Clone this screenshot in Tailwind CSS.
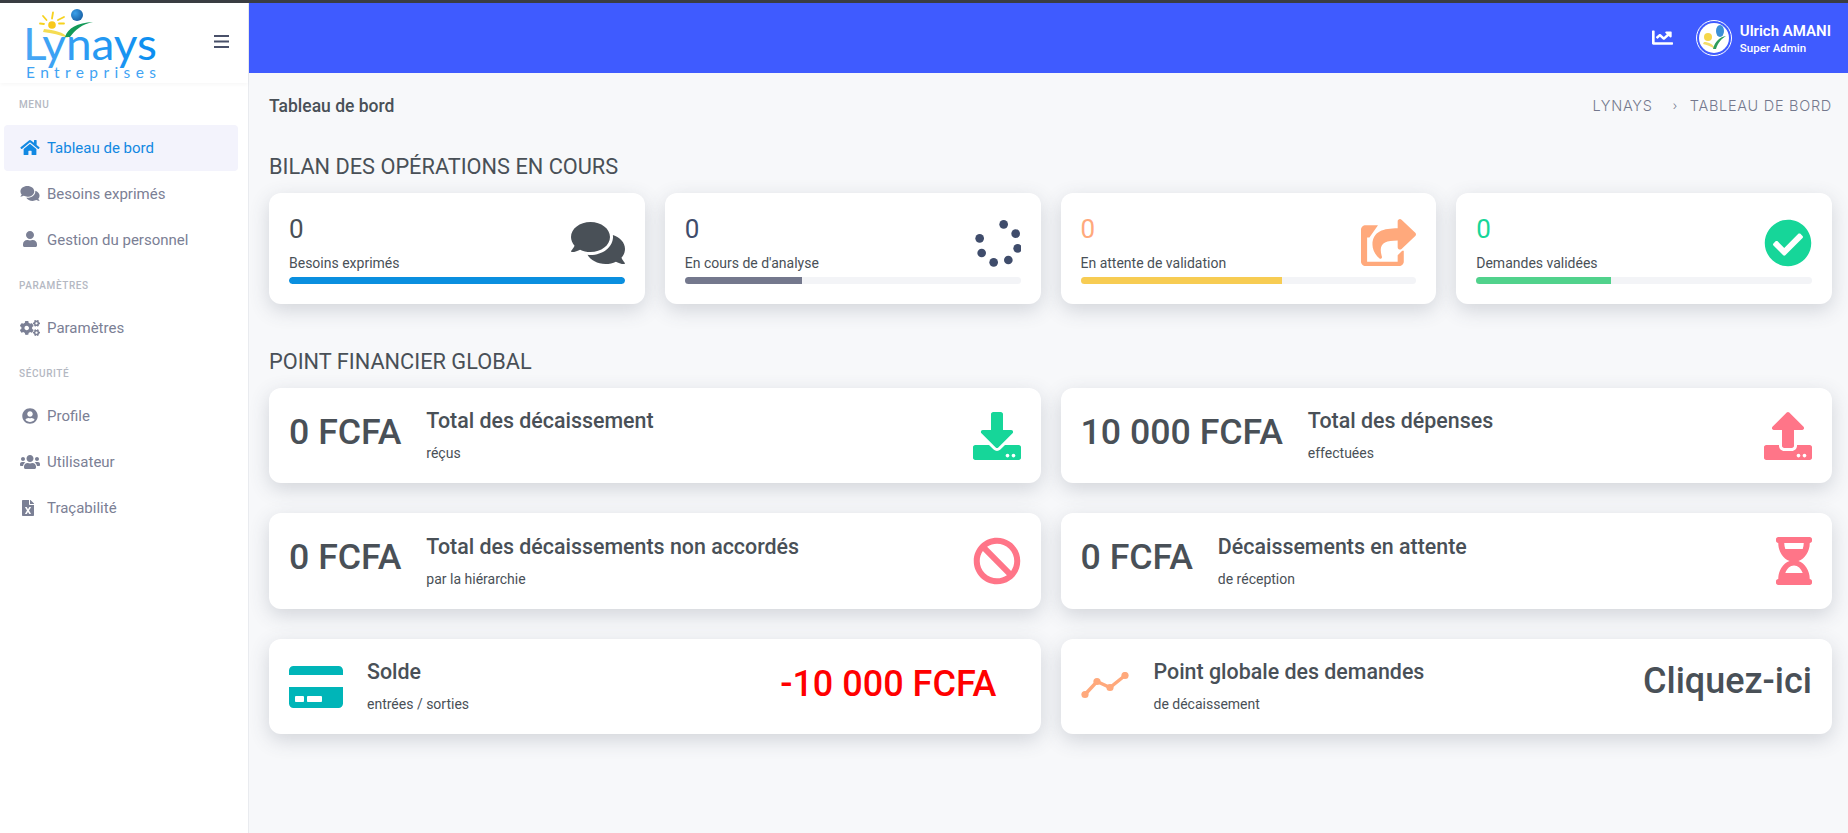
<!DOCTYPE html>
<html lang="fr">
<head>
    <meta charset="UTF-8" />
    <meta name="viewport" content="width=device-width, initial-scale=1.0"/>
    <title>Tableau de bord</title>
    <script src="https://cdn.jsdelivr.net/npm/@tailwindcss/browser@4"></script>
</head>
<body class="bg-[#f7f8fa] text-[#495057] font-['Roboto',sans-serif] overflow-hidden">
<div class="h-[3px] bg-[#3a3d42]"></div>
<div class="flex h-[830px]">

    <!-- Sidebar -->
    <aside class="w-[249px] shrink-0 bg-white border-r border-[#e9ebef] text-[#7b8095]">
        <div class="h-[80px] relative flex items-center justify-end pr-[19px] pb-[4px] shadow-[0_2px_4px_rgba(0,0,0,0.03)]">
            <svg class="absolute left-[20px] top-0" width="145" height="80" viewBox="0 0 145 80">
                <defs>
                    <linearGradient id="logoText" x1="0" x2="1" y1="0" y2="0">
                        <stop offset="0" stop-color="#4aa8f5"/>
                        <stop offset="1" stop-color="#0a8df0"/>
                    </linearGradient>
                    <radialGradient id="logoBall" cx="0.35" cy="0.35" r="0.8">
                        <stop offset="0" stop-color="#3aa0ea"/>
                        <stop offset="1" stop-color="#14589c"/>
                    </radialGradient>
                </defs>
                <circle cx="32" cy="22" r="3.8" fill="#f8c81c"/>
                <path d="M32 15.500l1-6M26.500 17l-3.500-4M38 17l6-3M24 21l-4-.5M39 20.500l5 0" stroke="#f6d21e" stroke-width="1.800" stroke-linecap="round" fill="none"/>
                <path d="M24 26c10 1 20 3 24 9-8-3-16-5-25-6z" fill="#f5dc52"/>
                <circle cx="57" cy="12" r="6" fill="url(#logoBall)"/>
                <path d="M45 34c3-9 12-14 28-15-11 2-18 8-23 15z" fill="#149a58"/>
                <text x="3" y="57" font-family="Lato, sans-serif" font-weight="400" font-size="45" textLength="134" lengthAdjust="spacingAndGlyphs" fill="url(#logoText)">Lynays</text>
                <text x="6" y="75" font-family="Lato, sans-serif" font-weight="400" font-size="15.500" textLength="130" fill="#3fa3f3">Entreprises</text>
            </svg>
            <svg width="15" height="13" viewBox="0 0 15 13"><path d="M0 0h15v2H0zM0 5.500h15v2H0zM0 11h15v2H0z" fill="#495069"/></svg>
        </div>

        <nav class="pl-[4px] pr-[10px] text-[15px]">
            <div class="h-[42px] flex items-center pl-[15px] pt-[1px] text-[10px] font-medium tracking-[0.06em] text-[#b4b8c2]">MENU</div>
            <a class="h-[46px] flex items-center pl-[16px] pt-[1px] gap-[7px] rounded bg-[#f3f3fc] text-[#1188e2]">
                <svg class="w-[20px] h-[17px] shrink-0 mb-[3px]" viewBox="0 0 576 512" fill="currentColor"><path d="M280.37 148.26L96 300.11V464a16 16 0 0 0 16 16l112.06-.29a16 16 0 0 0 15.92-16V368a16 16 0 0 1 16-16h64a16 16 0 0 1 16 16v95.64a16 16 0 0 0 16 16.05L464 480a16 16 0 0 0 16-16V300L295.67 148.26a12.19 12.19 0 0 0-15.3 0zM571.6 251.47L488 182.56V44.05a12 12 0 0 0-12-12h-56a12 12 0 0 0-12 12v72.61L318.47 43a48 48 0 0 0-61 0L4.34 251.47a12 12 0 0 0-1.6 16.9l25.5 31A12 12 0 0 0 45.15 301l235.22-193.74a12.19 12.19 0 0 1 15.3 0L530.9 301a12 12 0 0 0 16.9-1.6l25.5-31a12 12 0 0 0-1.7-16.93z"/></svg>
                <span>Tableau de bord</span>
            </a>
            <a class="h-[46px] flex items-center pl-[16px] pt-[1px] gap-[7px]">
                <svg class="w-[20px] h-[17px] shrink-0 mb-[3px]" viewBox="0 0 576 512" fill="currentColor"><path d="M416 192c0-88.400-93.100-160-208-160S0 103.600 0 192c0 34.300 14.100 65.900 38 92-13.400 30.200-35.500 54.200-35.800 54.500-2.200 2.300-2.800 5.700-1.500 8.700S4.800 352 8 352c36.600 0 66.900-12.300 88.700-25 32.200 15.700 70.300 25 111.300 25 114.900 0 208-71.600 208-160zm122 220c23.900-26 38-57.700 38-92 0-66.900-53.500-124.200-129.300-148.100.9 6.600 1.300 13.300 1.300 20.100 0 105.900-107.700 192-240 192-10.800 0-21.300-.8-31.700-1.900C207.800 439.600 281.800 480 368 480c41 0 79.100-9.200 111.300-25 21.800 12.700 52.100 25 88.700 25 3.200 0 6.100-1.900 7.300-4.800 1.300-2.900.7-6.300-1.500-8.700-.3-.3-22.400-24.200-35.800-54.500z"/></svg>
                <span>Besoins exprimés</span>
            </a>
            <a class="h-[46px] flex items-center pl-[16px] pt-[1px] gap-[7px]">
                <svg class="w-[20px] h-[16px] shrink-0 mb-[3px]" viewBox="0 0 448 512" fill="currentColor"><path d="M224 256c70.700 0 128-57.300 128-128S294.700 0 224 0 96 57.300 96 128s57.300 128 128 128zm89.600 32h-16.700c-22.200 10.200-46.900 16-72.900 16s-50.600-5.800-72.900-16h-16.700C60.200 288 0 348.200 0 422.400V464c0 26.500 21.500 48 48 48h352c26.500 0 48-21.500 48-48v-41.600c0-74.200-60.200-134.400-134.400-134.400z"/></svg>
                <span>Gestion du personnel</span>
            </a>

            <div class="h-[42px] flex items-center pl-[15px] mt-[1px] text-[10px] font-medium tracking-[0.06em] text-[#b4b8c2]">PARAMÈTRES</div>
            <a class="h-[46px] flex items-center pl-[16px] gap-[7px] mt-[-1px]">
                <svg class="w-[20px] h-[16px] shrink-0" viewBox="0 0 640 512" fill="currentColor"><path d="M512.100 191l-8.200 14.300c-3 5.300-9.400 7.500-15.100 5.400-11.800-4.400-22.600-10.700-32.100-18.600-4.600-3.800-5.800-10.500-2.800-15.700l8.200-14.300c-6.900-8-12.300-17.300-15.900-27.400h-16.500c-6 0-11.200-4.300-12.200-10.300-2-12-2.100-24.600 0-37.100 1-6 6.200-10.400 12.200-10.400h16.500c3.600-10.100 9-19.400 15.900-27.400l-8.200-14.300c-3-5.200-1.900-11.900 2.800-15.700 9.500-7.900 20.400-14.200 32.100-18.600 5.700-2.100 12.100.1 15.100 5.400l8.200 14.300c10.500-1.900 21.200-1.900 31.700 0L552 6.300c3-5.300 9.400-7.500 15.100-5.400 11.800 4.400 22.600 10.700 32.100 18.600 4.600 3.800 5.800 10.500 2.800 15.700l-8.200 14.300c6.900 8 12.300 17.300 15.900 27.400h16.500c6 0 11.200 4.300 12.200 10.300 2 12 2.100 24.600 0 37.100-1 6-6.200 10.400-12.200 10.400h-16.500c-3.600 10.100-9 19.400-15.900 27.400l8.200 14.300c3 5.200 1.900 11.900-2.800 15.700-9.500 7.900-20.400 14.200-32.100 18.600-5.700 2.100-12.100-.1-15.100-5.400l-8.200-14.300c-10.400 1.900-21.200 1.900-31.700 0zm-10.500-58.800c38.500 29.600 82.400-14.300 52.800-52.800-38.500-29.700-82.400 14.300-52.800 52.800zM386.300 286.100l33.700 16.800c10.100 5.800 14.500 18.100 10.500 29.100-8.900 24.200-26.400 46.400-42.600 65.800-7.400 8.900-20.200 11.100-30.300 5.300l-29.100-16.800c-16 13.700-34.600 24.600-54.900 31.700v33.600c0 11.600-8.300 21.600-19.700 23.600-24.600 4.200-50.400 4.400-75.900 0-11.500-2-20-11.900-20-23.600V418c-20.300-7.200-38.900-18-54.900-31.700L74 403c-10 5.800-22.900 3.600-30.300-5.300-16.200-19.400-33.300-41.600-42.200-65.700-4-10.900.4-23.200 10.500-29.100l33.300-16.800c-3.900-20.900-3.900-42.400 0-63.400L12 205.800c-10.100-5.800-14.600-18.100-10.500-29 8.900-24.200 26-46.400 42.200-65.800 7.400-8.900 20.200-11.100 30.300-5.300l29.100 16.800c16-13.700 34.600-24.600 54.900-31.700V57.100c0-11.500 8.200-21.500 19.600-23.500 24.600-4.200 50.500-4.400 76-.1 11.500 2 20 11.900 20 23.600v33.600c20.300 7.200 38.900 18 54.900 31.700l29.100-16.800c10-5.800 22.900-3.600 30.300 5.300 16.200 19.400 33.200 41.600 42.100 65.800 4 10.900.1 23.200-10 29.100l-33.700 16.800c3.900 21 3.900 42.500 0 63.500zm-117.600 21.100c59.200-77-28.700-164.900-105.700-105.700-59.200 77 28.700 164.900 105.700 105.700zm243.400 182.700l-8.200 14.300c-3 5.300-9.400 7.500-15.100 5.400-11.800-4.400-22.600-10.700-32.100-18.600-4.600-3.800-5.800-10.500-2.800-15.700l8.200-14.300c-6.900-8-12.300-17.300-15.900-27.400h-16.500c-6 0-11.200-4.300-12.200-10.300-2-12-2.100-24.600 0-37.100 1-6 6.200-10.400 12.200-10.400h16.500c3.600-10.100 9-19.400 15.900-27.400l-8.200-14.300c-3-5.200-1.900-11.900 2.800-15.700 9.500-7.900 20.400-14.200 32.100-18.600 5.700-2.100 12.100.1 15.100 5.400l8.200 14.300c10.500-1.900 21.200-1.900 31.700 0l8.200-14.300c3-5.300 9.400-7.500 15.100-5.400 11.800 4.400 22.600 10.700 32.100 18.600 4.600 3.800 5.800 10.500 2.800 15.700l-8.200 14.300c6.900 8 12.300 17.300 15.900 27.400h16.500c6 0 11.200 4.300 12.200 10.300 2 12 2.100 24.600 0 37.100-1 6-6.200 10.400-12.200 10.400h-16.500c-3.600 10.100-9 19.400-15.900 27.400l8.200 14.300c3 5.200 1.900 11.900-2.800 15.700-9.500 7.900-20.400 14.200-32.100 18.600-5.700 2.100-12.100-.1-15.100-5.400l-8.200-14.300c-10.400 1.900-21.200 1.900-31.700 0zM501.600 431c38.500 29.600 82.400-14.300 52.800-52.800-38.500-29.600-82.400 14.300-52.800 52.800z"/></svg>
                <span>Paramètres</span>
            </a>

            <div class="h-[42px] flex items-center pl-[15px] mt-[1px] text-[10px] font-medium tracking-[0.06em] text-[#b4b8c2]">SÉCURITÉ</div>
            <a class="h-[46px] flex items-center pl-[16px] gap-[7px] mt-[-1px]">
                <svg class="w-[20px] h-[16px] shrink-0" viewBox="0 0 496 512" fill="currentColor"><path d="M248 8C111 8 0 119 0 256s111 248 248 248 248-111 248-248S385 8 248 8zm0 96c48.600 0 88 39.400 88 88s-39.400 88-88 88-88-39.400-88-88 39.400-88 88-88zm0 344c-58.700 0-111.300-26.600-146.500-68.200 18.800-35.400 55.600-59.800 98.500-59.800 2.400 0 4.800.4 7.100 1.100 13 4.200 26.600 6.900 40.900 6.900 14.300 0 28-2.700 40.900-6.900 2.300-.7 4.700-1.100 7.100-1.100 42.900 0 79.700 24.400 98.500 59.800C359.300 421.400 306.700 448 248 448z"/></svg>
                <span>Profile</span>
            </a>
            <a class="h-[46px] flex items-center pl-[16px] gap-[7px]">
                <svg class="w-[20px] h-[16px] shrink-0" viewBox="0 0 640 512" fill="currentColor"><path d="M96 224c35.300 0 64-28.700 64-64s-28.700-64-64-64-64 28.700-64 64 28.700 64 64 64zm448 0c35.300 0 64-28.700 64-64s-28.700-64-64-64-64 28.700-64 64 28.700 64 64 64zm32 32h-64c-17.600 0-33.500 7.100-45.100 18.600 40.300 22.100 68.900 62 75.100 109.400h66c17.700 0 32-14.300 32-32v-32c0-35.300-28.700-64-64-64zm-256 0c61.900 0 112-50.100 112-112S381.900 32 320 32 208 82.100 208 144s50.100 112 112 112zm76.800 32h-8.300c-20.800 10-43.900 16-68.500 16s-47.600-6-68.500-16h-8.300C179.600 288 128 339.600 128 403.200V432c0 26.500 21.500 48 48 48h288c26.500 0 48-21.500 48-48v-28.800c0-63.600-51.600-115.200-115.200-115.200zm-223.700-13.400C161.500 263.100 145.600 256 128 256H64c-35.300 0-64 28.700-64 64v32c0 17.700 14.300 32 32 32h65.900c6.300-47.400 34.900-87.300 75.200-109.400z"/></svg>
                <span>Utilisateur</span>
            </a>
            <a class="h-[46px] flex items-center pl-[16px] gap-[7px]">
                <svg class="w-[20px] h-[16px] shrink-0" viewBox="0 0 448 512" fill="currentColor"><path transform="translate(-32 0)" d="M224 136V0H24C10.700 0 0 10.700 0 24v464c0 13.300 10.700 24 24 24h336c13.300 0 24-10.700 24-24V160H248c-13.200 0-24-10.800-24-24zm60.100 106.500L224 336l60.100 93.500c5.100 8-.6 18.500-10.100 18.500h-34.900c-4.400 0-8.500-2.400-10.600-6.300C208.900 405.500 192 373 192 373c-6.100 14.100-9.500 19.100-36.600 68.800-2.100 3.900-6.100 6.300-10.500 6.300H110c-9.500 0-15.200-10.500-10.100-18.500l60.300-93.500-60.300-93.500c-5.200-8 .6-18.500 10.100-18.500h34.800c4.400 0 8.500 2.400 10.600 6.300 26.100 48.800 20 33.600 36.600 68.500 0 0 6.100-11.700 36.600-68.500 2.100-3.900 6.200-6.300 10.600-6.300H274c9.500-.1 15.200 10.400 10.100 18.400zM384 121.900v6.100H256V0h6.100c6.400 0 12.500 2.500 17 7l97.900 98c4.500 4.500 7 10.600 7 16.900z"/></svg>
                <span>Traçabilité</span>
            </a>
        </nav>
    </aside>

    <!-- Main -->
    <div class="flex-1 min-w-0">
        <header class="h-[70px] bg-[#3f5bff] flex items-center justify-end pr-[17px] text-white">
            <svg class="w-[21px] h-[19px] mr-[23px] mb-[2px]" viewBox="0 0 512 512" preserveAspectRatio="none" fill="currentColor"><path d="M496 384H64V80c0-8.840-7.160-16-16-16H16C7.160 64 0 71.160 0 80v336c0 17.670 14.330 32 32 32h464c8.840 0 16-7.160 16-16v-32c0-8.840-7.160-16-16-16zM464 96H345.940c-21.380 0-32.090 25.850-16.970 40.970l32.400 32.400L288 242.750l-73.370-73.370c-12.500-12.500-32.760-12.500-45.250 0l-68.690 68.690c-6.250 6.250-6.250 16.380 0 22.630l22.620 22.620c6.250 6.250 16.380 6.250 22.630 0L192 237.250l73.370 73.370c12.500 12.500 32.760 12.500 45.250 0l96-96 32.400 32.400c15.120 15.120 40.970 4.410 40.970-16.970V112c0-8.840-7.160-16-16-16z"/></svg>
            <div class="w-[36px] h-[36px] rounded-full border border-white p-[2px] mr-[8px]">
                <svg class="w-full h-full rounded-full bg-white" viewBox="0 0 30 30">
                    <circle cx="9" cy="14" r="4" fill="#f5d64a"/>
                    <path d="M5 19c5 0 9 2 11 7-5-3-8-4-12-5z" fill="#f3dc6a"/>
                    <ellipse cx="21" cy="8" rx="4" ry="6" fill="#3b8fd6"/>
                    <path d="M14 26c2-8 7-12 13-13-5 3-8 7-10 13z" fill="#2f9d5c"/>
                </svg>
            </div>
            <div class="mt-[2px]">
                <div class="text-[15px] leading-[18px] font-semibold">Ulrich AMANI</div>
                <div class="text-[11.5px] leading-[17px] font-medium">Super Admin</div>
            </div>
        </header>

        <div class="pl-[20px] pr-[16px]">
            <div class="h-[66px] flex items-center justify-between">
                <h4 class="text-[17.5px] font-medium">Tableau de bord</h4>
                <div class="flex items-center text-[14.5px] tracking-[0.05em] text-[#74788d] font-['Inter',sans-serif] font-light">
                    <span>LYNAYS</span>
                    <span class="ml-[20px] mr-[12px] text-[12px]">›</span>
                    <span>TABLEAU DE BORD</span>
                </div>
            </div>

            <h2 class="text-[21.75px] leading-[28px] mt-[14px] mb-[12px]">BILAN DES OPÉRATIONS EN COURS</h2>

            <div class="grid grid-cols-4 gap-[20px]">
                <div class="h-[111px] bg-white rounded-xl shadow-[0_6px_20px_rgba(60,70,90,0.2)] px-[20px] pt-[20px]">
                    <div class="flex justify-between h-[64px]">
                        <div>
                            <div class="text-[26px] leading-[30px] mt-[1px]">0</div>
                            <div class="text-[14px] leading-[18px] mt-[10px]">Besoins exprimés</div>
                        </div>
                        <svg class="w-[54px] h-[48px] mt-[6px]" viewBox="0 0 576 512" fill="#495057"><path d="M416 192c0-88.400-93.100-160-208-160S0 103.600 0 192c0 34.300 14.100 65.900 38 92-13.400 30.200-35.500 54.200-35.800 54.500-2.200 2.300-2.800 5.700-1.500 8.700S4.800 352 8 352c36.600 0 66.900-12.300 88.700-25 32.200 15.700 70.300 25 111.300 25 114.900 0 208-71.600 208-160zm122 220c23.900-26 38-57.700 38-92 0-66.900-53.500-124.200-129.300-148.100.9 6.600 1.300 13.300 1.300 20.100 0 105.900-107.700 192-240 192-10.800 0-21.300-.8-31.700-1.900C207.800 439.600 281.800 480 368 480c41 0 79.100-9.200 111.300-25 21.800 12.700 52.100 25 88.700 25 3.200 0 6.100-1.900 7.300-4.800 1.300-2.900.7-6.300-1.500-8.700-.3-.3-22.400-24.200-35.800-54.500z"/></svg>
                    </div>
                    <div class="h-[7px] rounded-full bg-[#f3f4f7] overflow-hidden"><div class="h-full bg-[#0a8fdf] rounded-full" style="width:100%"></div></div>
                </div>

                <div class="h-[111px] bg-white rounded-xl shadow-[0_6px_20px_rgba(60,70,90,0.2)] px-[20px] pt-[20px]">
                    <div class="flex justify-between h-[64px]">
                        <div>
                            <div class="text-[26px] leading-[30px] mt-[1px] text-[#3f4c6b]">0</div>
                            <div class="text-[14px] leading-[18px] mt-[10px]">En cours de d'analyse</div>
                        </div>
                        <svg class="w-[48px] h-[48px] mt-[6px]" viewBox="0 0 144 144" fill="#3f4c6b"><circle cx="92" cy="16" r="13"/><circle cx="128" cy="44" r="13"/><circle cx="134" cy="88" r="13"/><circle cx="106" cy="123" r="13"/><circle cx="62" cy="130" r="13"/><circle cx="26" cy="102" r="13"/><circle cx="20" cy="58" r="13"/></svg>
                    </div>
                    <div class="h-[7px] rounded-full bg-[#f3f4f7] overflow-hidden"><div class="h-full bg-[#74788d]" style="width:35%"></div></div>
                </div>

                <div class="h-[111px] bg-white rounded-xl shadow-[0_6px_20px_rgba(60,70,90,0.2)] px-[20px] pt-[20px]">
                    <div class="flex justify-between h-[64px]">
                        <div>
                            <div class="text-[26px] leading-[30px] mt-[1px] text-[#ffa97c]">0</div>
                            <div class="text-[14px] leading-[18px] mt-[10px]">En attente de validation</div>
                        </div>
                        <svg class="w-[55px] h-[49px] mt-[6px]" viewBox="0 0 576 512" fill="#ffa97c"><path d="M568.482 177.448L424.479 313.433C409.300 327.768 384 317.140 384 295.985v-71.963c-144.575.97-205.566 35.113-164.775 171.353 4.483 14.973-12.846 26.567-25.006 17.330C155.252 383.105 120 326.488 120 269.339c0-143.937 117.599-172.500 264-173.312V24.012c0-21.174 25.317-31.768 40.479-17.448l144.003 135.988c10.020 9.463 10.028 25.425 0 34.896z"/><path d="M64 128h70l-46 64H64zM0 112c0-26.500 21.500-48 48-48h130L134 128H64v320h320v-70l48-46h16v112c0 26.500-21.500 48-48 48H48c-26.500 0-48-21.500-48-48z"/></svg>
                    </div>
                    <div class="h-[7px] rounded-full bg-[#f3f4f7] overflow-hidden"><div class="h-full bg-[#f7cc53]" style="width:60%"></div></div>
                </div>

                <div class="h-[111px] bg-white rounded-xl shadow-[0_6px_20px_rgba(60,70,90,0.2)] px-[20px] pt-[20px]">
                    <div class="flex justify-between h-[64px]">
                        <div>
                            <div class="text-[26px] leading-[30px] mt-[1px] text-[#16d699]">0</div>
                            <div class="text-[14px] leading-[18px] mt-[10px]">Demandes validées</div>
                        </div>
                        <svg class="w-[48px] h-[48px] mt-[6px]" viewBox="0 0 512 512" fill="#16d699"><path d="M504 256c0 136.967-111.033 248-248 248S8 392.967 8 256 119.033 8 256 8s248 111.033 248 248zM227.314 387.314l184-184c6.248-6.248 6.248-16.379 0-22.627l-22.627-22.627c-6.248-6.249-16.379-6.249-22.628 0L216 308.118l-70.059-70.059c-6.248-6.248-16.379-6.248-22.628 0l-22.627 22.627c-6.248 6.248-6.248 16.379 0 22.627l104 104c6.249 6.249 16.379 6.249 22.628.001z"/></svg>
                    </div>
                    <div class="h-[7px] rounded-full bg-[#f3f4f7] overflow-hidden"><div class="h-full bg-[#51d28c]" style="width:40%"></div></div>
                </div>
            </div>

            <h2 class="text-[21.75px] leading-[28px] mt-[44px] mb-[12px]">POINT FINANCIER GLOBAL</h2>

            <div class="grid grid-cols-2 gap-x-[20px] gap-y-[30px]">
                <div class="h-[95px] bg-white rounded-xl shadow-[0_6px_20px_rgba(60,70,90,0.2)] px-[20px] flex items-center">
                    <div class="text-[35.7px] font-medium mr-[25px] mb-[6px] whitespace-nowrap">0 FCFA</div>
                    <div class="flex-1 mb-[2px]">
                        <div class="text-[21.4px] font-medium leading-[28px]">Total des décaissement</div>
                        <div class="text-[14px] leading-[18px] mt-[9px]">réçus</div>
                    </div>
                    <svg class="w-[48px] h-[48px]" viewBox="0 0 512 512" fill="#16d699"><path d="M216 0h80c13.300 0 24 10.700 24 24v168h87.700c17.800 0 26.700 21.500 14.100 34.100L269.700 378.300c-7.500 7.500-19.800 7.500-27.300 0L90.100 226.100c-12.600-12.600-3.700-34.100 14.100-34.100H192V24c0-13.300 10.700-24 24-24zm296 376v112c0 13.300-10.700 24-24 24H24c-13.300 0-24-10.700-24-24V376c0-13.300 10.700-24 24-24h146.700l49 49c20.100 20.100 52.500 20.100 72.600 0l49-49H488c13.300 0 24 10.700 24 24zm-124 88c0-11-9-20-20-20s-20 9-20 20 9 20 20 20 20-9 20-20zm64 0c0-11-9-20-20-20s-20 9-20 20 9 20 20 20 20-9 20-20z"/></svg>
                </div>

                <div class="h-[95px] bg-white rounded-xl shadow-[0_6px_20px_rgba(60,70,90,0.2)] px-[20px] flex items-center">
                    <div class="text-[35.7px] font-medium mr-[25px] mb-[6px] whitespace-nowrap">10 000 FCFA</div>
                    <div class="flex-1 mb-[2px]">
                        <div class="text-[21.4px] font-medium leading-[28px]">Total des dépenses</div>
                        <div class="text-[14px] leading-[18px] mt-[9px]">effectuées</div>
                    </div>
                    <svg class="w-[48px] h-[48px]" viewBox="0 0 512 512" fill="#ff7588"><path d="M296 384h-80c-13.300 0-24-10.700-24-24V192h-87.700c-17.800 0-26.700-21.500-14.100-34.100L242.300 5.700c7.500-7.500 19.800-7.500 27.300 0l152.200 152.200c12.600 12.600 3.700 34.100-14.100 34.100H320v168c0 13.300-10.700 24-24 24zm216-8v112c0 13.300-10.700 24-24 24H24c-13.300 0-24-10.700-24-24V376c0-13.300 10.700-24 24-24h136v8c0 30.900 25.100 56 56 56h80c30.900 0 56-25.100 56-56v-8h136c13.300 0 24 10.700 24 24zm-124 88c0-11-9-20-20-20s-20 9-20 20 9 20 20 20 20-9 20-20zm64 0c0-11-9-20-20-20s-20 9-20 20 9 20 20 20 20-9 20-20z"/></svg>
                </div>

                <div class="h-[96px] bg-white rounded-xl shadow-[0_6px_20px_rgba(60,70,90,0.2)] px-[20px] flex items-center">
                    <div class="text-[35.7px] font-medium mr-[25px] mb-[6px] whitespace-nowrap">0 FCFA</div>
                    <div class="flex-1 mb-[1px]">
                        <div class="text-[21.4px] font-medium leading-[28px]">Total des décaissements non accordés</div>
                        <div class="text-[14px] leading-[18px] mt-[9px]">par la hiérarchie</div>
                    </div>
                    <svg class="w-[48px] h-[48px]" viewBox="0 0 512 512" fill="#ff7588"><path d="M256 8C119.034 8 8 119.033 8 256s111.034 248 248 248 248-111.034 248-248S392.967 8 256 8zm130.108 117.892c65.448 65.448 70 165.481 20.677 235.637L150.470 105.216c70.204-49.356 170.226-44.735 235.638 20.676zM125.892 386.108c-65.448-65.448-70-165.481-20.677-235.637L361.530 406.784c-70.203 49.356-170.226 44.736-235.638-20.676z"/></svg>
                </div>

                <div class="h-[96px] bg-white rounded-xl shadow-[0_6px_20px_rgba(60,70,90,0.2)] px-[20px] flex items-center">
                    <div class="text-[35.7px] font-medium mr-[25px] mb-[6px] whitespace-nowrap">0 FCFA</div>
                    <div class="flex-1 mb-[1px]">
                        <div class="text-[21.4px] font-medium leading-[28px]">Décaissements en attente</div>
                        <div class="text-[14px] leading-[18px] mt-[9px]">de réception</div>
                    </div>
                    <svg class="w-[36px] h-[48px]" viewBox="0 0 384 512" fill="#ff7588"><path d="M360 0H24C10.745 0 0 10.745 0 24v16c0 13.255 10.745 24 24 24 0 90.965 51.016 167.734 120.842 192C75.016 280.266 24 357.035 24 448c-13.255 0-24 10.745-24 24v16c0 13.255 10.745 24 24 24h336c13.255 0 24-10.745 24-24v-16c0-13.255-10.745-24-24-24 0-90.965-51.016-167.734-120.842-192C308.984 231.734 360 154.965 360 64c13.255 0 24-10.745 24-24V24c0-13.255-10.745-24-24-24zm-75.078 384H99.080c17.059-46.797 52.096-80 92.920-80 40.821 0 75.862 33.196 92.922 80zm.019-256H99.078C91.988 108.548 88 86.748 88 64h208c0 22.805-3.987 44.587-11.059 64z"/></svg>
                </div>

                <div class="h-[95px] bg-white rounded-xl shadow-[0_6px_20px_rgba(60,70,90,0.2)] px-[20px] flex items-center">
                    <svg class="w-[54px] h-[48px] mr-[24px]" viewBox="0 0 576 512" fill="#00b5b8"><path d="M0 432c0 26.500 21.500 48 48 48h480c26.500 0 48-21.500 48-48V256H0v176zm192-68c0-6.600 5.400-12 12-12h136c6.600 0 12 5.400 12 12v40c0 6.600-5.400 12-12 12H204c-6.600 0-12-5.400-12-12v-40zm-128 0c0-6.600 5.400-12 12-12h72c6.600 0 12 5.400 12 12v40c0 6.600-5.400 12-12 12H76c-6.600 0-12-5.400-12-12v-40zM576 80v48H0V80c0-26.500 21.500-48 48-48h480c26.500 0 48 21.500 48 48z"/></svg>
                    <div class="flex-1 mb-[2px]">
                        <div class="text-[21.4px] font-medium leading-[28px]">Solde</div>
                        <div class="text-[14px] leading-[18px] mt-[9px]">entrées / sorties</div>
                    </div>
                    <div class="text-[36px] font-medium text-[#ff0000] mr-[24px] mb-[5px] whitespace-nowrap">-10 000 FCFA</div>
                </div>

                <div class="h-[95px] bg-white rounded-xl shadow-[0_6px_20px_rgba(60,70,90,0.2)] px-[20px] flex items-center">
                    <svg class="w-[48px] h-[30px] mr-[25px]" viewBox="0 0 48 30" fill="#ffa97c"><path d="M4 22.500L16 9.500l13 6L44 3.500" stroke="#ffa97c" stroke-width="3.500" fill="none"/><circle cx="4" cy="22.500" r="3.600"/><circle cx="16" cy="9.500" r="3.600"/><circle cx="29" cy="15.500" r="3.600"/><circle cx="44" cy="3.500" r="3.600"/></svg>
                    <div class="flex-1 mb-[2px]">
                        <div class="text-[21.4px] font-medium leading-[28px]">Point globale des demandes</div>
                        <div class="text-[14px] leading-[18px] mt-[9px]">de décaissement</div>
                    </div>
                    <div class="text-[36px] font-medium mb-[12px] whitespace-nowrap">Cliquez-ici</div>
                </div>
            </div>
        </div>
    </div>
</div>
</body>
</html>
